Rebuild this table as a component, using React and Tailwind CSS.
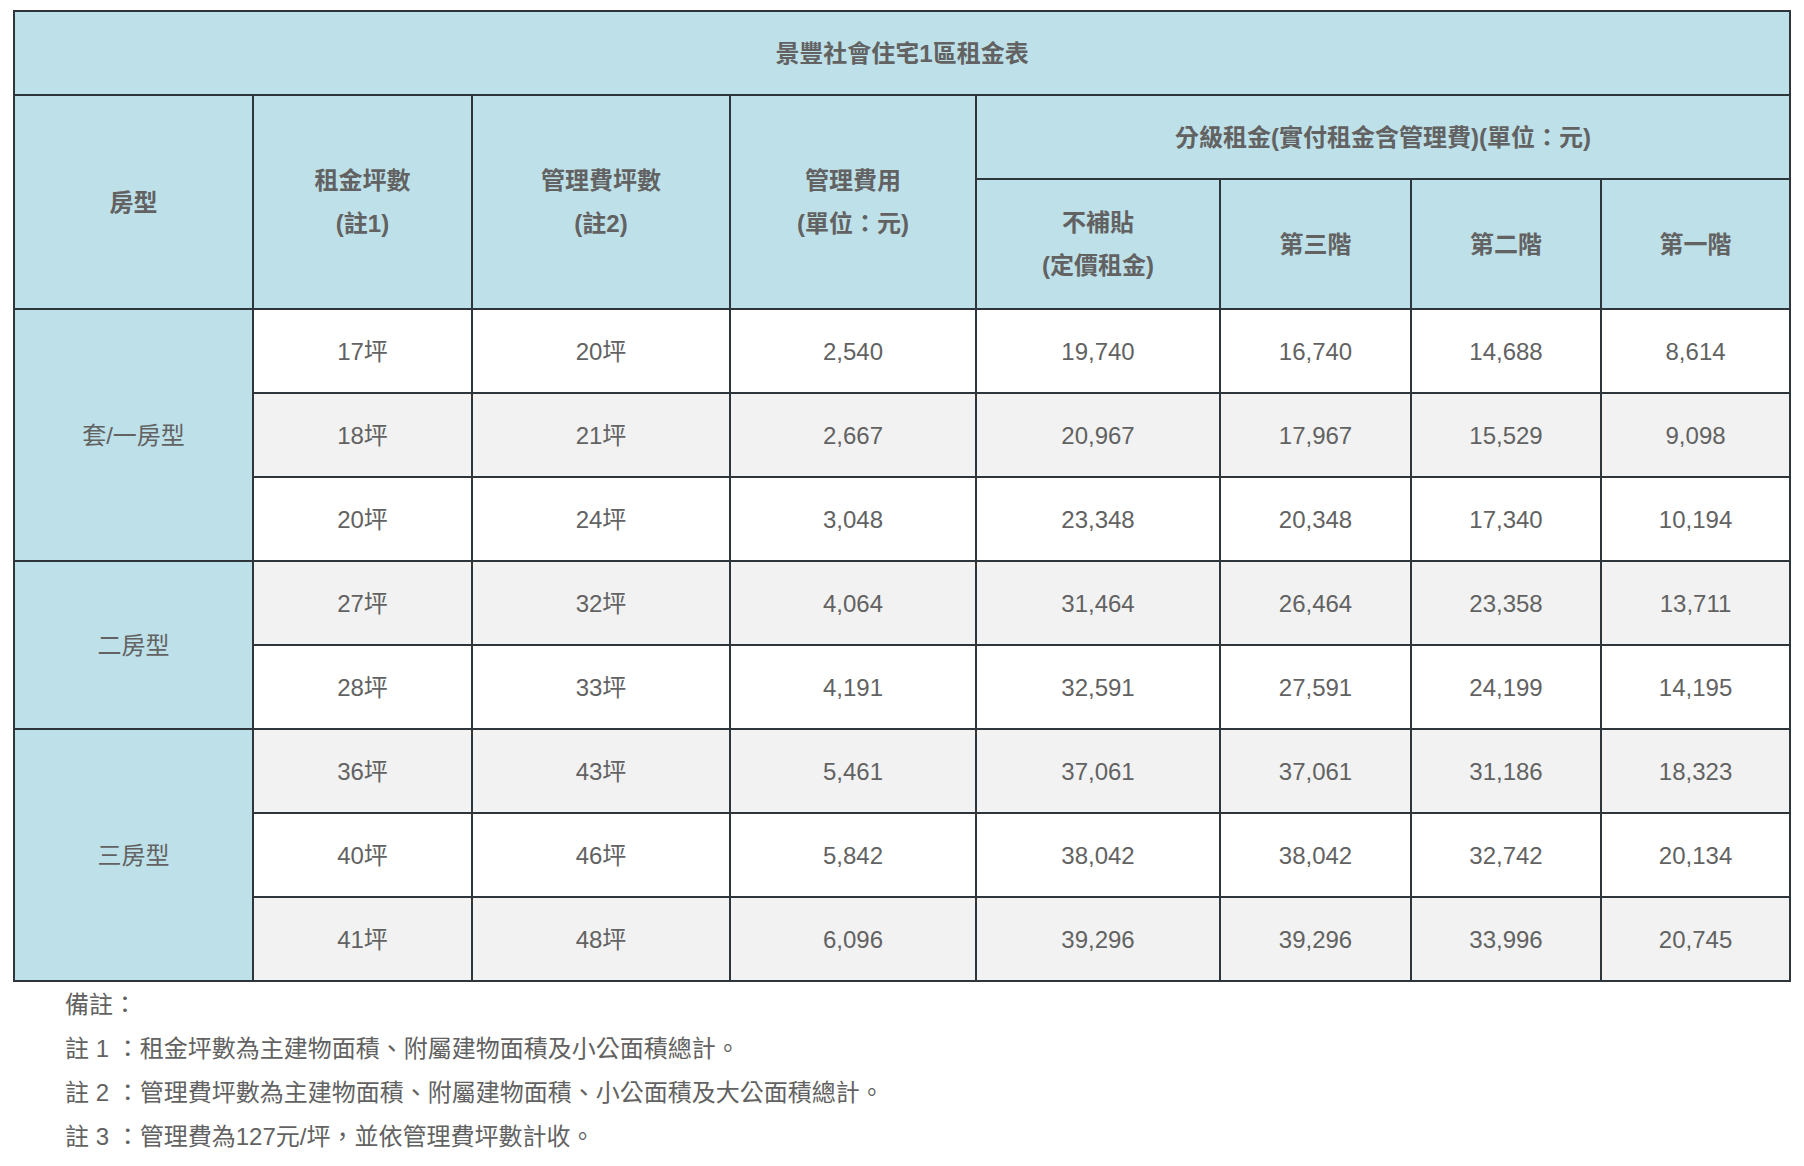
import React from "react";

const rows = [
  ["17坪", "20坪", "2,540", "19,740", "16,740", "14,688", "8,614"],
  ["18坪", "21坪", "2,667", "20,967", "17,967", "15,529", "9,098"],
  ["20坪", "24坪", "3,048", "23,348", "20,348", "17,340", "10,194"],
  ["27坪", "32坪", "4,064", "31,464", "26,464", "23,358", "13,711"],
  ["28坪", "33坪", "4,191", "32,591", "27,591", "24,199", "14,195"],
  ["36坪", "43坪", "5,461", "37,061", "37,061", "31,186", "18,323"],
  ["40坪", "46坪", "5,842", "38,042", "38,042", "32,742", "20,134"],
  ["41坪", "48坪", "6,096", "39,296", "39,296", "33,996", "20,745"],
];

const groups = { 0: ["套/一房型", 3], 3: ["二房型", 2], 5: ["三房型", 3] };

const notes = [
  "備註：",
  "註 1 ：租金坪數為主建物面積、附屬建物面積及小公面積總計。",
  "註 2 ：管理費坪數為主建物面積、附屬建物面積、小公面積及大公面積總計。",
  "註 3 ：管理費為127元/坪，並依管理費坪數計收。",
];

const th = "border-2 border-[#2f363b] bg-[#bee0e8] font-bold text-center align-middle";
const td = "border-2 border-[#2f363b] text-center align-middle h-[84px]";

export default function App() {
  return (
    <div
      className="min-h-screen bg-white pt-[10px] px-[13px] text-[24px] text-[#626262]"
      style={{ fontFamily: '"Liberation Sans", "Noto Sans CJK TC", sans-serif' }}
    >
      <table className="w-[1776px] border-collapse table-fixed leading-[43px]">
        <colgroup>
          <col className="w-[239px]" />
          <col className="w-[219px]" />
          <col className="w-[258px]" />
          <col className="w-[246px]" />
          <col className="w-[244px]" />
          <col className="w-[191px]" />
          <col className="w-[190px]" />
          <col className="w-[189px]" />
        </colgroup>
        <thead>
          <tr>
            <th colSpan={8} className={`${th} h-[84px]`}>
              景豐社會住宅1區租金表
            </th>
          </tr>
          <tr>
            <th rowSpan={2} className={th}>房型</th>
            <th rowSpan={2} className={th}>租金坪數<br />(註1)</th>
            <th rowSpan={2} className={th}>管理費坪數<br />(註2)</th>
            <th rowSpan={2} className={th}>管理費用<br />(單位：元)</th>
            <th colSpan={4} className={`${th} h-[84px]`}>
              分級租金(實付租金含管理費)(單位：元)
            </th>
          </tr>
          <tr>
            <th className={`${th} h-[130px]`}>不補貼<br />(定價租金)</th>
            <th className={th}>第三階</th>
            <th className={th}>第二階</th>
            <th className={th}>第一階</th>
          </tr>
        </thead>
        <tbody>
          {rows.map((r, i) => (
            <tr key={i} className={i % 2 === 1 ? "bg-[#f2f2f2]" : "bg-white"}>
              {groups[i] && (
                <td rowSpan={groups[i][1]} className={`${td} bg-[#bee0e8]`}>
                  {groups[i][0]}
                </td>
              )}
              {r.map((c, j) => (
                <td key={j} className={td}>{c}</td>
              ))}
            </tr>
          ))}
        </tbody>
      </table>
      <div className="pl-[52px] pt-px leading-[44px]">
        {notes.map((n) => (
          <p key={n}>{n}</p>
        ))}
      </div>
    </div>
  );
}
